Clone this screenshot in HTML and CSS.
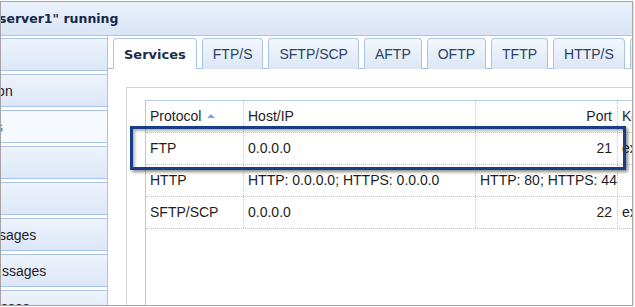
FILE: index.html
```html
<!DOCTYPE html>
<html>
<head>
<meta charset="utf-8">
<link rel="stylesheet" href="styles.css">
</head>
<body>
<div class="window">
  <div class="titlebar"><span class="title">server1" running</span></div>
  <div class="body">
    <div class="sidebar">
      <div class="nav-item"></div>
      <div class="nav-item"><span class="nav-text cut-ion">ion</span></div>
      <div class="nav-item selected"><span class="nav-text cut-s">s</span></div>
      <div class="nav-item"></div>
      <div class="nav-item"></div>
      <div class="nav-item"><span class="nav-text cut-sages">sages</span></div>
      <div class="nav-item"><span class="nav-text cut-ssages">ssages</span></div>
      <div class="nav-item"><span class="nav-text">sses</span></div>
    </div>
    <div class="main">
      <div class="tabstrip">
        <div class="tab active">Services</div>
        <div class="tab">FTP/S</div>
        <div class="tab">SFTP/SCP</div>
        <div class="tab">AFTP</div>
        <div class="tab">OFTP</div>
        <div class="tab">TFTP</div>
        <div class="tab">HTTP/S</div>
        <div class="tab">AS2</div>
      </div>
      <div class="content">
        <div class="panel">
          <div class="grid">
            <div class="row header">
              <div class="cell c1">Protocol<span class="sort-arrow"></span></div>
              <div class="cell c2">Host/IP</div>
              <div class="cell c3 num">Port</div>
              <div class="cell c4">Key</div>
            </div>
            <div class="row">
              <div class="cell c1">FTP</div>
              <div class="cell c2">0.0.0.0</div>
              <div class="cell c3 num">21</div>
              <div class="cell c4">ex</div>
            </div>
            <div class="row">
              <div class="cell c1">HTTP</div>
              <div class="cell c2">HTTP: 0.0.0.0; HTTPS: 0.0.0.0</div>
              <div class="cell c3 num">HTTP: 80; HTTPS: 443</div>
              <div class="cell c4"></div>
            </div>
            <div class="row">
              <div class="cell c1">SFTP/SCP</div>
              <div class="cell c2">0.0.0.0</div>
              <div class="cell c3 num">22</div>
              <div class="cell c4">ex</div>
            </div>
          </div>
        </div>
      </div>
    </div>
  </div>
  <div class="callout"></div>
</div>
</body>
</html>
```
FILE: styles.css
```css
html, body {
  margin: 0;
  padding: 0;
  background: #ffffff;
}
body {
  padding-top: 1px;
  font-family: "Liberation Sans", Arial, sans-serif;
  font-size: 14px;
  color: #1e1e1e;
}
.window {
  position: relative;
  box-sizing: border-box;
  width: 633px;
  height: 305px;
  border: 1px solid #a4a4a4;
  overflow: hidden;
  display: flex;
  flex-direction: column;
  background: #ffffff;
  box-shadow: 1px 1px 2px rgba(0, 0, 0, 0.15);
}
.titlebar {
  flex: none;
  height: 33px;
  border-bottom: 1px solid #a9c4ea;
  background: linear-gradient(#eaf1fb, #d9e5f7);
  display: flex;
  align-items: center;
  overflow: hidden;
}
.title {
  margin-left: -2px;
  font-family: "DejaVu Sans", Verdana, sans-serif;
  font-weight: bold;
  font-size: 12.5px;
  color: #15284b;
  white-space: nowrap;
}
.body {
  flex: 1;
  display: flex;
  min-height: 0;
}
.sidebar {
  flex: none;
  width: 106px;
  border-right: 1px solid #a9c4ea;
  padding-top: 2px;
  overflow: hidden;
}
.nav-item {
  box-sizing: border-box;
  height: 33px;
  margin-bottom: 3px;
  border-top: 1px solid #a9c4ea;
  border-bottom: 1px solid #a9c4ea;
  background: linear-gradient(#eef3fc, #dce7f7);
  display: flex;
  align-items: center;
  overflow: hidden;
  white-space: nowrap;
}
.nav-item.selected {
  background: #f6f9fe;
}
.nav-text {
  color: #1e1e1e;
}
.cut-ion { margin-left: -7px; }
.cut-s { margin-left: -5px; color: #3f7fd8; }
.cut-sages { margin-left: -2px; }
.cut-ssages { margin-left: 1px; }
.main {
  flex: 1;
  min-width: 0;
  display: flex;
  flex-direction: column;
  overflow: hidden;
}
.tabstrip {
  flex: none;
  display: flex;
  gap: 5px;
  padding: 2px 0 0 5px;
  border-bottom: 1px solid #a9c4ea;
  height: 30px;
}
.tab {
  flex: none;
  box-sizing: border-box;
  height: 31px;
  padding: 0 10px;
  border: 1px solid #a9c4ea;
  border-bottom: none;
  border-radius: 4px 4px 0 0;
  background: linear-gradient(#f4f8fd, #dbe6f6);
  color: #2c3f66;
  display: flex;
  align-items: center;
  white-space: nowrap;
  margin-bottom: -1px;
}
.tab.active {
  background: #ffffff;
  color: #1c2b4d;
  font-family: "DejaVu Sans", Verdana, sans-serif;
  font-weight: bold;
  font-size: 13px;
}
.content {
  flex: 1;
  padding: 18px 0 0 18px;
  overflow: hidden;
}
.panel {
  box-sizing: border-box;
  width: 640px;
  height: 400px;
  border: 1px solid #d6d6d6;
  padding: 12px 0 0 18px;
}
.grid {
  width: 600px;
  height: 380px;
  border-top: 1px solid #b7cae6;
  border-left: 1px solid #b7cae6;
}
.row {
  display: flex;
  height: 32px;
  box-sizing: border-box;
  border-bottom: 1px dotted #c6c6c6;
}
.cell {
  box-sizing: border-box;
  flex: none;
  padding: 0 4px;
  border-right: 1px dotted #c6c6c6;
  line-height: 31px;
  overflow: hidden;
  white-space: nowrap;
  color: #1e1e1e;
}
.c1 { width: 98px; }
.c2 { width: 232px; }
.c3 { width: 142px; }
.c4 { width: 80px; }
.num { text-align: right; }
.c3.num { padding-right: 5px; }
.sort-arrow {
  display: inline-block;
  width: 0;
  height: 0;
  margin-left: 6px;
  border-left: 4px solid transparent;
  border-right: 4px solid transparent;
  border-bottom: 4px solid #7ea6de;
  vertical-align: 3px;
}
.callout {
  position: absolute;
  left: 129px;
  top: 124px;
  width: 496px;
  height: 44px;
  box-sizing: border-box;
  border: 3px solid #1b3d86;
  box-shadow: 2px 2px 3px rgba(0, 0, 0, 0.45), inset 2px 2px 3px rgba(0, 0, 0, 0.3);
}
```
